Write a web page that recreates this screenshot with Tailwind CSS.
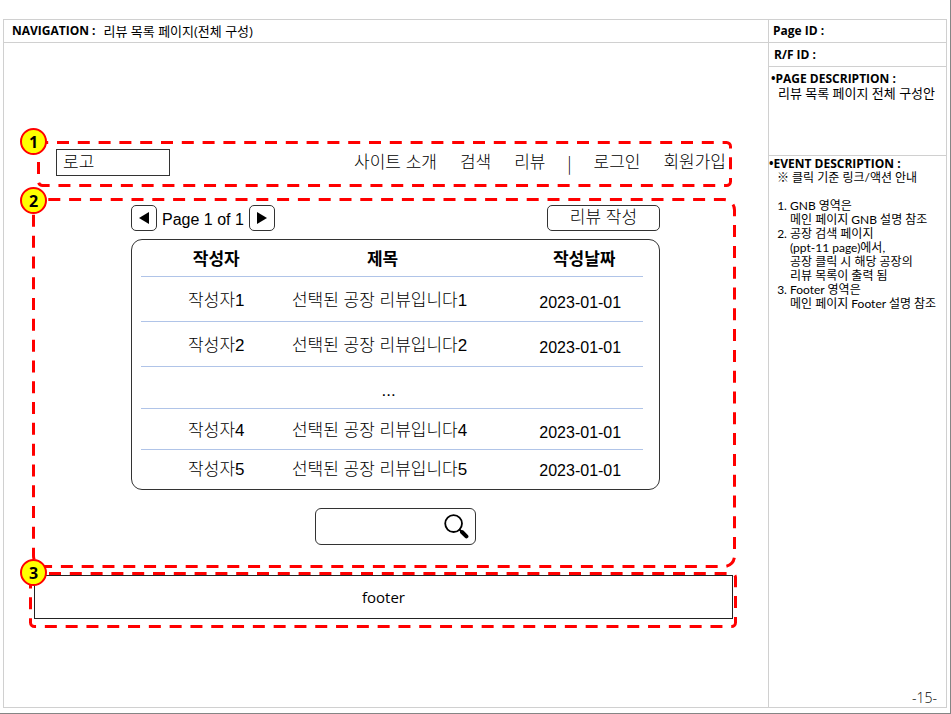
<!DOCTYPE html>
<html lang="ko">
<head>
<meta charset="utf-8">
<meta name="viewport" content="width=device-width, initial-scale=1">
<title>리뷰 목록 페이지(전체 구성)</title>
<script src="https://cdn.jsdelivr.net/npm/@tailwindcss/browser@4"></script>
</head>
<body class="flex min-h-screen flex-col border-r border-b border-[#858585] bg-white pt-[19px] pr-[3px] pb-[5px] pl-[3px] font-['Open_Sans','Noto_Sans_CJK_KR',sans-serif] text-black">
<div class="flex flex-1 border border-[#d0d0d0]">

  <div class="flex min-w-0 flex-1 flex-col">
    <header class="flex h-[23px] items-center gap-2 border-b border-[#d0d0d0] pl-2 text-[13px] leading-4">
      <span class="text-[12px] font-bold">NAVIGATION :</span>
      <h1 class="font-normal">리뷰 목록 페이지(전체 구성)</h1>
    </header>

    <main class="pt-[98px] font-['Liberation_Sans','Noto_Sans_CJK_KR',sans-serif] text-[17px] leading-6 font-light">
      <!-- 1: global navigation -->
      <section class="relative mr-[36px] ml-[33px] flex h-[46px] items-start justify-between pt-2 pr-[6px] pl-[19px]">
        <svg class="pointer-events-none absolute inset-0 h-full w-full overflow-visible" aria-hidden="true"><rect class="h-[calc(100%-3px)] w-[calc(100%-3px)]" x="1.5" y="1.5" rx="4" fill="none" stroke="#f00" stroke-width="3" stroke-dasharray="12 8.8" stroke-dashoffset="6.3"/></svg>
        <a href="#" class="flex h-[27px] w-[114px] items-center border border-[#333] pl-[6px]">로고</a>
        <nav class="flex h-[27px] items-center gap-[23px]">
          <a href="#">사이트 소개</a>
          <a href="#">검색</a>
          <a href="#">리뷰</a>
          <span class="flex w-[2px] justify-center font-['Noto_Sans_CJK_KR',sans-serif]">|</span>
          <a href="#">로그인</a>
          <a href="#">회원가입</a>
        </nav>
        <span class="absolute -top-[13px] -left-[17px] z-10 flex size-[27px] items-center justify-center rounded-full border-2 border-[#f00] bg-[#ff0] font-['Open_Sans',sans-serif] text-base font-bold">1</span>
      </section>

      <!-- 2: review list -->
      <section class="relative mt-[11px] mr-[32px] ml-[28px] flex h-[370px] flex-col pt-[7px] pr-[76px] pl-[99px]">
        <svg class="pointer-events-none absolute inset-0 h-full w-full overflow-visible" aria-hidden="true"><rect class="h-[calc(100%-3px)] w-[calc(100%-3px)]" x="1.5" y="1.5" rx="10.5" fill="none" stroke="#f00" stroke-width="3" stroke-dasharray="12 8.8" stroke-dashoffset="16.5"/></svg>
        <div class="flex h-[26px] items-center justify-between">
          <div class="flex items-center gap-[5px] text-base">
            <button type="button" aria-label="이전 페이지" class="flex size-[26px] items-center justify-center rounded-[5px] border border-[#333]"><svg class="h-3 w-[10px]" viewBox="0 0 10 12"><path d="M10 0v12L0 6z"/></svg></button>
            <span class="pt-[3px]">Page 1 of 1</span>
            <button type="button" aria-label="다음 페이지" class="flex size-[26px] items-center justify-center rounded-[5px] border border-[#333]"><svg class="h-3 w-[10px]" viewBox="0 0 10 12"><path d="M0 0v12l10-6z"/></svg></button>
          </div>
          <button type="button" class="flex h-[26px] w-[113px] items-center justify-center rounded-[5px] border border-[#333]">리뷰 작성</button>
        </div>

        <div class="mt-2 h-[251px] rounded-[11px] border border-[#333] pr-4 pl-[9px]">
          <table class="w-full table-fixed border-collapse text-center text-base">
            <colgroup><col class="w-[30%]"><col class="w-[45%]"><col class="w-[25%]"></colgroup>
            <thead>
              <tr class="h-[36px] border-b border-[#b0c4e8] text-[17px]"><th class="p-0 pt-1 font-bold">작성자</th><th class="p-0 pt-1 pr-11 font-bold">제목</th><th class="p-0 pt-1 pl-2 font-bold">작성날짜</th></tr>
            </thead>
            <tbody>
              <tr class="h-[45px] border-b border-[#b0c4e8]"><td class="p-0 pt-1 text-[17px]">작성자1</td><td class="p-0 pt-1 pr-[50px] text-[17px] whitespace-nowrap">선택된 공장 리뷰입니다1</td><td class="p-0 pt-2">2023-01-01</td></tr>
              <tr class="h-[45px] border-b border-[#b0c4e8]"><td class="p-0 pt-1 text-[17px]">작성자2</td><td class="p-0 pt-1 pr-[50px] text-[17px] whitespace-nowrap">선택된 공장 리뷰입니다2</td><td class="p-0 pt-2">2023-01-01</td></tr>
              <tr class="h-[42px] border-b border-[#b0c4e8]"><td class="p-0"></td><td class="p-0 pt-2 pr-8 text-[17px]">...</td><td class="p-0"></td></tr>
              <tr class="h-[41px] border-b border-[#b0c4e8]"><td class="p-0 pt-1 text-[17px]">작성자4</td><td class="p-0 pt-1 pr-[50px] text-[17px] whitespace-nowrap">선택된 공장 리뷰입니다4</td><td class="p-0 pt-2">2023-01-01</td></tr>
              <tr class="h-[40px]"><td class="p-0 text-[17px]">작성자5</td><td class="p-0 pr-[50px] text-[17px] whitespace-nowrap">선택된 공장 리뷰입니다5</td><td class="p-0 pt-1">2023-01-01</td></tr>
            </tbody>
          </table>
        </div>

        <form role="search" class="mx-auto mt-[18px] flex h-[37px] w-[161px] items-center rounded-md border border-[#333] pr-[6px]">
          <input type="search" aria-label="리뷰 검색" class="h-full min-w-0 flex-1 bg-transparent px-2 text-base outline-none">
          <button type="button" aria-label="검색" class="size-[25px]"><svg class="size-[25px]" viewBox="0 0 25 25" fill="none" stroke="#000" stroke-linecap="round"><circle cx="9.6" cy="9.6" r="8.4" stroke-width="1.8"/><path d="M15.6 15.6l2.5 2.5" stroke-width="2"/><path d="M18 18l4.4 4.4" stroke-width="4"/></svg></button>
        </form>
        <span class="absolute -top-[11px] -left-[12px] z-10 flex size-[27px] items-center justify-center rounded-full border-2 border-[#f00] bg-[#ff0] font-['Open_Sans',sans-serif] text-base font-bold">2</span>
      </section>

      <!-- 3: footer -->
      <footer class="relative mt-1 mr-[31px] ml-[25px] h-[56px] pt-[3px] pr-1 pb-[9px] pl-[5px]">
        <svg class="pointer-events-none absolute inset-0 h-full w-full overflow-visible" aria-hidden="true"><rect class="h-[calc(100%-3px)] w-[calc(100%-3px)]" x="1.5" y="1.5" rx="4" fill="none" stroke="#f00" stroke-width="3" stroke-dasharray="12 8.8" stroke-dashoffset="6.3"/></svg>
        <div class="flex h-full items-center justify-center border border-[#222] font-['Open_Sans',sans-serif] text-[15px] font-normal">footer</div>
        <span class="absolute -top-[13px] -left-[9px] z-10 flex size-[27px] items-center justify-center rounded-full border-2 border-[#f00] bg-[#ff0] font-['Open_Sans',sans-serif] text-base font-bold">3</span>
      </footer>
    </main>
  </div>

  <aside class="flex w-[178px] shrink-0 flex-col border-l border-[#d0d0d0] text-[12px] leading-[14px]">
    <h2 class="flex h-[23px] items-center border-b border-[#d0d0d0] pl-1 font-bold">Page ID :</h2>
    <h2 class="flex h-[24px] items-center border-b border-[#d0d0d0] pl-[5px] font-bold">R/F ID :</h2>
    <section class="h-[89px] border-b border-[#d0d0d0] pt-[5px] pl-[2px]">
      <h2 class="font-bold">•PAGE DESCRIPTION :</h2>
      <p class="pl-[7px] text-[13px] leading-[14px] whitespace-nowrap">리뷰 목록 페이지 전체 구성안</p>
    </section>
    <section class="flex-1 pt-px font-['Lato','Noto_Sans_CJK_KR',sans-serif]">
      <h2 class="font-['Open_Sans',sans-serif] font-bold">•EVENT DESCRIPTION :</h2>
      <p class="pl-2">※ 클릭 기준 링크/액션 안내</p>
      <ol class="mt-[14px] list-decimal pl-[21px] whitespace-nowrap">
        <li><p>GNB 영역은</p><p>메인 페이지 GNB 설명 참조</p></li>
        <li><p>공장 검색 페이지</p><p>(ppt-11 page)에서,</p><p>공장 클릭 시 해당 공장의</p><p>리뷰 목록이 출력 됨</p></li>
        <li><p>Footer 영역은</p><p>메인 페이지 Footer 설명 참조</p></li>
      </ol>
    </section>
    <p class="pr-[9px] pb-[2px] text-right text-[14px] font-light">-15-</p>
  </aside>
</div>
</body>
</html>
